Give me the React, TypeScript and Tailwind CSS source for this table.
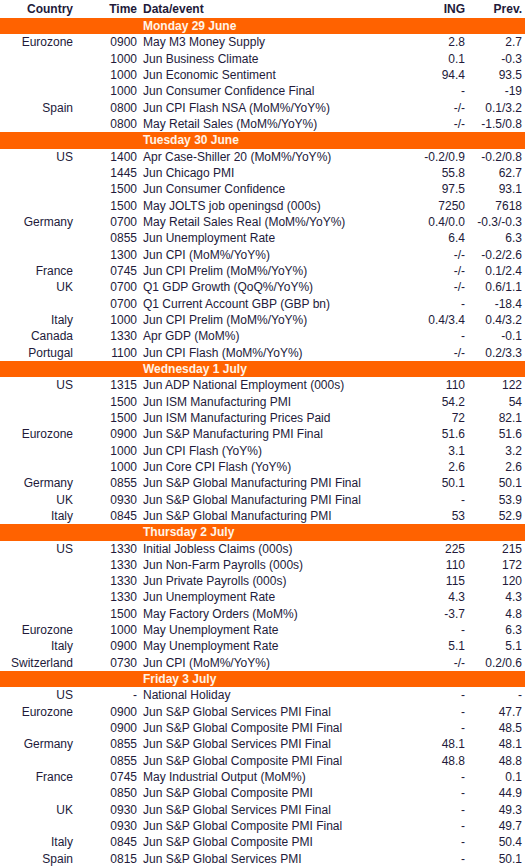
type Row = [string, string, string, string, string];
type Day = { title: string; rows: Row[] };

const DAYS: Day[] = [
  {
    title: 'Monday 29 June',
    rows: [
      ['Eurozone', '0900', 'May M3 Money Supply', '2.8', '2.7'],
      ['', '1000', 'Jun Business Climate', '0.1', '-0.3'],
      ['', '1000', 'Jun Economic Sentiment', '94.4', '93.5'],
      ['', '1000', 'Jun Consumer Confidence Final', '-', '-19'],
      ['Spain', '0800', 'Jun CPI Flash NSA (MoM%/YoY%)', '-/-', '0.1/3.2'],
      ['', '0800', 'May Retail Sales (MoM%/YoY%)', '-/-', '-1.5/0.8'],
    ],
  },
  {
    title: 'Tuesday 30 June',
    rows: [
      ['US', '1400', 'Apr Case-Shiller 20 (MoM%/YoY%)', '-0.2/0.9', '-0.2/0.8'],
      ['', '1445', 'Jun Chicago PMI', '55.8', '62.7'],
      ['', '1500', 'Jun Consumer Confidence', '97.5', '93.1'],
      ['', '1500', 'May JOLTS job openingsd (000s)', '7250', '7618'],
      ['Germany', '0700', 'May Retail Sales Real (MoM%/YoY%)', '0.4/0.0', '-0.3/-0.3'],
      ['', '0855', 'Jun Unemployment Rate', '6.4', '6.3'],
      ['', '1300', 'Jun CPI (MoM%/YoY%)', '-/-', '-0.2/2.6'],
      ['France', '0745', 'Jun CPI Prelim (MoM%/YoY%)', '-/-', '0.1/2.4'],
      ['UK', '0700', 'Q1 GDP Growth (QoQ%/YoY%)', '-/-', '0.6/1.1'],
      ['', '0700', 'Q1 Current Account GBP (GBP bn)', '-', '-18.4'],
      ['Italy', '1000', 'Jun CPI Prelim (MoM%/YoY%)', '0.4/3.4', '0.4/3.2'],
      ['Canada', '1330', 'Apr GDP (MoM%)', '-', '-0.1'],
      ['Portugal', '1100', 'Jun CPI Flash (MoM%/YoY%)', '-/-', '0.2/3.3'],
    ],
  },
  {
    title: 'Wednesday 1 July',
    rows: [
      ['US', '1315', 'Jun ADP National Employment (000s)', '110', '122'],
      ['', '1500', 'Jun ISM Manufacturing PMI', '54.2', '54'],
      ['', '1500', 'Jun ISM Manufacturing Prices Paid', '72', '82.1'],
      ['Eurozone', '0900', 'Jun S&P Manufacturing PMI Final', '51.6', '51.6'],
      ['', '1000', 'Jun CPI Flash (YoY%)', '3.1', '3.2'],
      ['', '1000', 'Jun Core CPI Flash (YoY%)', '2.6', '2.6'],
      ['Germany', '0855', 'Jun S&P Global Manufacturing PMI Final', '50.1', '50.1'],
      ['UK', '0930', 'Jun S&P Global Manufacturing PMI Final', '-', '53.9'],
      ['Italy', '0845', 'Jun S&P Global Manufacturing PMI', '53', '52.9'],
    ],
  },
  {
    title: 'Thursday 2 July',
    rows: [
      ['US', '1330', 'Initial Jobless Claims (000s)', '225', '215'],
      ['', '1330', 'Jun Non-Farm Payrolls (000s)', '110', '172'],
      ['', '1330', 'Jun Private Payrolls (000s)', '115', '120'],
      ['', '1330', 'Jun Unemployment Rate', '4.3', '4.3'],
      ['', '1500', 'May Factory Orders (MoM%)', '-3.7', '4.8'],
      ['Eurozone', '1000', 'May Unemployment Rate', '-', '6.3'],
      ['Italy', '0900', 'May Unemployment Rate', '5.1', '5.1'],
      ['Switzerland', '0730', 'Jun CPI (MoM%/YoY%)', '-/-', '0.2/0.6'],
    ],
  },
  {
    title: 'Friday 3 July',
    rows: [
      ['US', '-', 'National Holiday', '-', '-'],
      ['Eurozone', '0900', 'Jun S&P Global Services PMI Final', '-', '47.7'],
      ['', '0900', 'Jun S&P Global Composite PMI Final', '-', '48.5'],
      ['Germany', '0855', 'Jun S&P Global Services PMI Final', '48.1', '48.1'],
      ['', '0855', 'Jun S&P Global Composite PMI Final', '48.8', '48.8'],
      ['France', '0745', 'May Industrial Output (MoM%)', '-', '0.1'],
      ['', '0850', 'Jun S&P Global Composite PMI', '-', '44.9'],
      ['UK', '0930', 'Jun S&P Global Services PMI Final', '-', '49.3'],
      ['', '0930', 'Jun S&P Global Composite PMI Final', '-', '49.7'],
      ['Italy', '0845', 'Jun S&P Global Composite PMI', '-', '50.4'],
      ['Spain', '0815', 'Jun S&P Global Services PMI', '-', '50.1'],
    ],
  },
];

const grid = 'grid grid-cols-[73px_64px_1fr_60px_57px] pr-[3px] whitespace-nowrap';

export default function App() {
  return (
    <div className="w-[525px] h-[867px] bg-white text-[#221a3a] text-[12px] font-['Liberation_Sans',Arial,sans-serif] overflow-hidden">
      <div className={`${grid} h-[18px] leading-[19px] font-bold`}>
        <div className="text-right">Country</div>
        <div className="text-right">Time</div>
        <div className="pl-[6px]">Data/event</div>
        <div className="text-right">ING</div>
        <div className="text-right">Prev.</div>
      </div>
      {DAYS.map((d) => (
        <div key={d.title}>
          <div className={`${grid} h-[16.33px] leading-[16.33px] bg-[#ff6200] text-[#fff4e8] font-bold`}>
            <div className="col-start-3 col-span-3 pl-[6px]">{d.title}</div>
          </div>
          {d.rows.map((r, i) => (
            <div key={i} className={`${grid} h-[16.33px] leading-[16.33px]`}>
              <div className="text-right">{r[0]}</div>
              <div className="text-right">{r[1]}</div>
              <div className="pl-[6px] overflow-hidden">{r[2]}</div>
              <div className="text-right">{r[3]}</div>
              <div className="text-right">{r[4]}</div>
            </div>
          ))}
        </div>
      ))}
    </div>
  );
}
